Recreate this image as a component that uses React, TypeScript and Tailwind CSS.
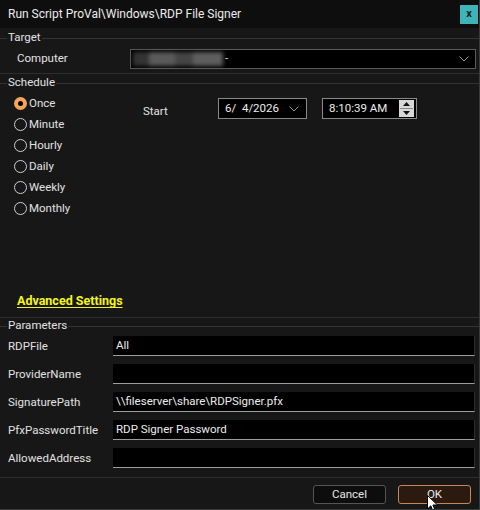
import React from 'react';

const font = { fontFamily: 'Roboto, "Noto Sans", "Liberation Sans", sans-serif' };

const GroupHeader = ({ title }: { title: string }) => (
  <div className="flex items-center h-[14px]">
    <div className="w-[7px] h-px bg-[#333333]" />
    <span className="px-px leading-none text-[#e2e2e2]">{title}</span>
    <div className="flex-1 h-px bg-[#333333]" />
  </div>
);

const Radio = ({ label, checked }: { label: string; checked?: boolean }) => (
  <div className="flex items-center h-[21px] pl-[14px] gap-[2px]">
    {checked ? (
      <div className="w-[13px] h-[13px] rounded-full bg-[#f4a55a] flex items-center justify-center">
        <div className="w-[5px] h-[5px] rounded-full bg-black" />
      </div>
    ) : (
      <div className="w-[13px] h-[13px] rounded-full border border-[#cfcfcf]" />
    )}
    <span className="text-[#e2e2e2]">{label}</span>
  </div>
);

const Chevron = () => (
  <svg width="10" height="6" viewBox="0 0 10 6" fill="none" stroke="#9a9a9a" strokeWidth="1">
    <path d="M0.5 0.5 L5 5 L9.5 0.5" />
  </svg>
);

const ParamRow = ({ label, value }: { label: string; value?: string }) => (
  <div className="flex items-center h-[28px]">
    <span className="w-[113px] pl-[8px] text-[#e2e2e2] pt-[2px]">{label}</span>
    <div className="w-[362px] h-[20px] bg-black border-b border-b-[#9c9c9c] border-r border-r-[#2c2c2c] flex items-center pl-[3px] text-[#ececec]">
      {value}
    </div>
  </div>
);

export default function App() {
  return (
    <div
      className="relative w-[480px] h-[510px] bg-[#171717] border-r border-b border-[#3a3a3a] flex flex-col text-[11.5px] overflow-hidden"
      style={font}
    >
      {/* title bar */}
      <div className="h-[28px] bg-[#0e0e0e] flex items-center justify-between pl-[8px] pr-px">
        <span className="text-[12px] text-[#ececec]">Run Script ProVal\Windows\RDP File Signer</span>
        <div className="w-[18px] h-[19px] bg-[#3fb3b8] flex items-center justify-center text-[11px] font-bold text-[#0d2224] leading-none pb-px">
          x
        </div>
      </div>

      {/* target */}
      <div className="pt-[3px] pb-[4px] border-b border-[#2e2e2e]">
        <GroupHeader title="Target" />
        <div className="flex items-center mt-[4px] h-[20px]">
          <span className="w-[130px] pl-[17px] text-[#e2e2e2]">Computer</span>
          <div className="flex-1 mr-[3px] h-[20px] bg-black border border-[#5a5a5a] flex items-center pl-[2px] pr-[6px]">
            <div className="flex items-center blur-[2px]">
              <div className="w-[16px] h-[14px] bg-[#333333]" />
              <div className="w-[26px] h-[14px] bg-[#5a5a5a]" />
              <div className="w-[18px] h-[14px] bg-[#454545]" />
              <div className="w-[30px] h-[14px] bg-[#5e5e5e]" />
            </div>
            <span className="ml-[2px] text-[#dddddd]">-</span>
            <div className="flex-1" />
            <Chevron />
          </div>
        </div>
      </div>

      {/* schedule */}
      <div className="mt-[2px] h-[242px] border-b border-[#2e2e2e] flex flex-col">
        <GroupHeader title="Schedule" />
        <div className="flex mt-[3px]">
          <div className="w-[129px] flex flex-col">
            <Radio label="Once" checked />
            <Radio label="Minute" />
            <Radio label="Hourly" />
            <Radio label="Daily" />
            <Radio label="Weekly" />
            <Radio label="Monthly" />
          </div>
          <div className="flex items-start mt-[5px]">
            <span className="w-[89px] pl-[14px] pt-[5px] text-[#e2e2e2]">Start</span>
            <div className="w-[89px] h-[21px] border border-[#8a8a8a] bg-black flex items-center pl-[6px] pr-[7px] text-[#ececec]">
              <span className="whitespace-pre">6/  4/2026</span>
              <div className="flex-1" />
              <Chevron />
            </div>
            <div className="ml-[15px] w-[95px] h-[21px] border border-[#8a8a8a] bg-black flex items-center pl-[6px] pr-[2px] text-[#ececec]">
              <span>8:10:39 AM</span>
              <div className="flex-1" />
              <div className="w-[15px] h-[17px] bg-[#d8d8d8] flex flex-col items-center justify-center gap-[2px]">
                <svg width="7" height="4" viewBox="0 0 7 4"><path d="M0 4 L3.5 0 L7 4 Z" fill="#111" /></svg>
                <div className="w-[13px] h-px bg-[#888888]" />
                <svg width="7" height="4" viewBox="0 0 7 4"><path d="M0 0 L3.5 4 L7 0 Z" fill="#111" /></svg>
              </div>
            </div>
          </div>
        </div>
        <div className="flex-1" />
        <div className="pl-[17px] pb-[6px]">
          <span className="text-[12.5px] font-bold text-[#f5f51a] underline underline-offset-2">Advanced Settings</span>
        </div>
      </div>

      {/* parameters */}
      <div className="mt-px h-[159px] border-b border-[#2e2e2e] flex flex-col">
        <GroupHeader title="Parameters" />
        <div className="flex flex-col mt-[-1px]">
          <ParamRow label="RDPFile" value="All" />
          <ParamRow label="ProviderName" />
          <ParamRow label="SignaturePath" value="\\fileserver\share\RDPSigner.pfx" />
          <ParamRow label="PfxPasswordTitle" value="RDP Signer Password" />
          <ParamRow label="AllowedAddress" />
        </div>
      </div>

      {/* buttons */}
      <div className="flex justify-end gap-[12px] pr-[8px] mt-[7px]">
        <div className="w-[73px] h-[19px] rounded-[3px] border border-[#555555] bg-[#0d0d0d] flex items-center justify-center text-[#e6e6e6]">
          Cancel
        </div>
        <div className="w-[73px] h-[19px] rounded-[3px] border border-[#d0834a] bg-[#2a1a0f] flex items-center justify-center text-[#ececec]">
          OK
        </div>
      </div>

      {/* mouse pointer */}
      <svg className="absolute left-[427px] top-[495px]" width="12" height="18" viewBox="0 0 12 18">
        <path d="M0.5 0.5 L0.5 14 L3.8 10.8 L6.2 16.5 L8.2 15.6 L5.9 10 L10.5 10 Z" fill="#ffffff" stroke="#000000" strokeWidth="1" />
      </svg>
    </div>
  );
}
